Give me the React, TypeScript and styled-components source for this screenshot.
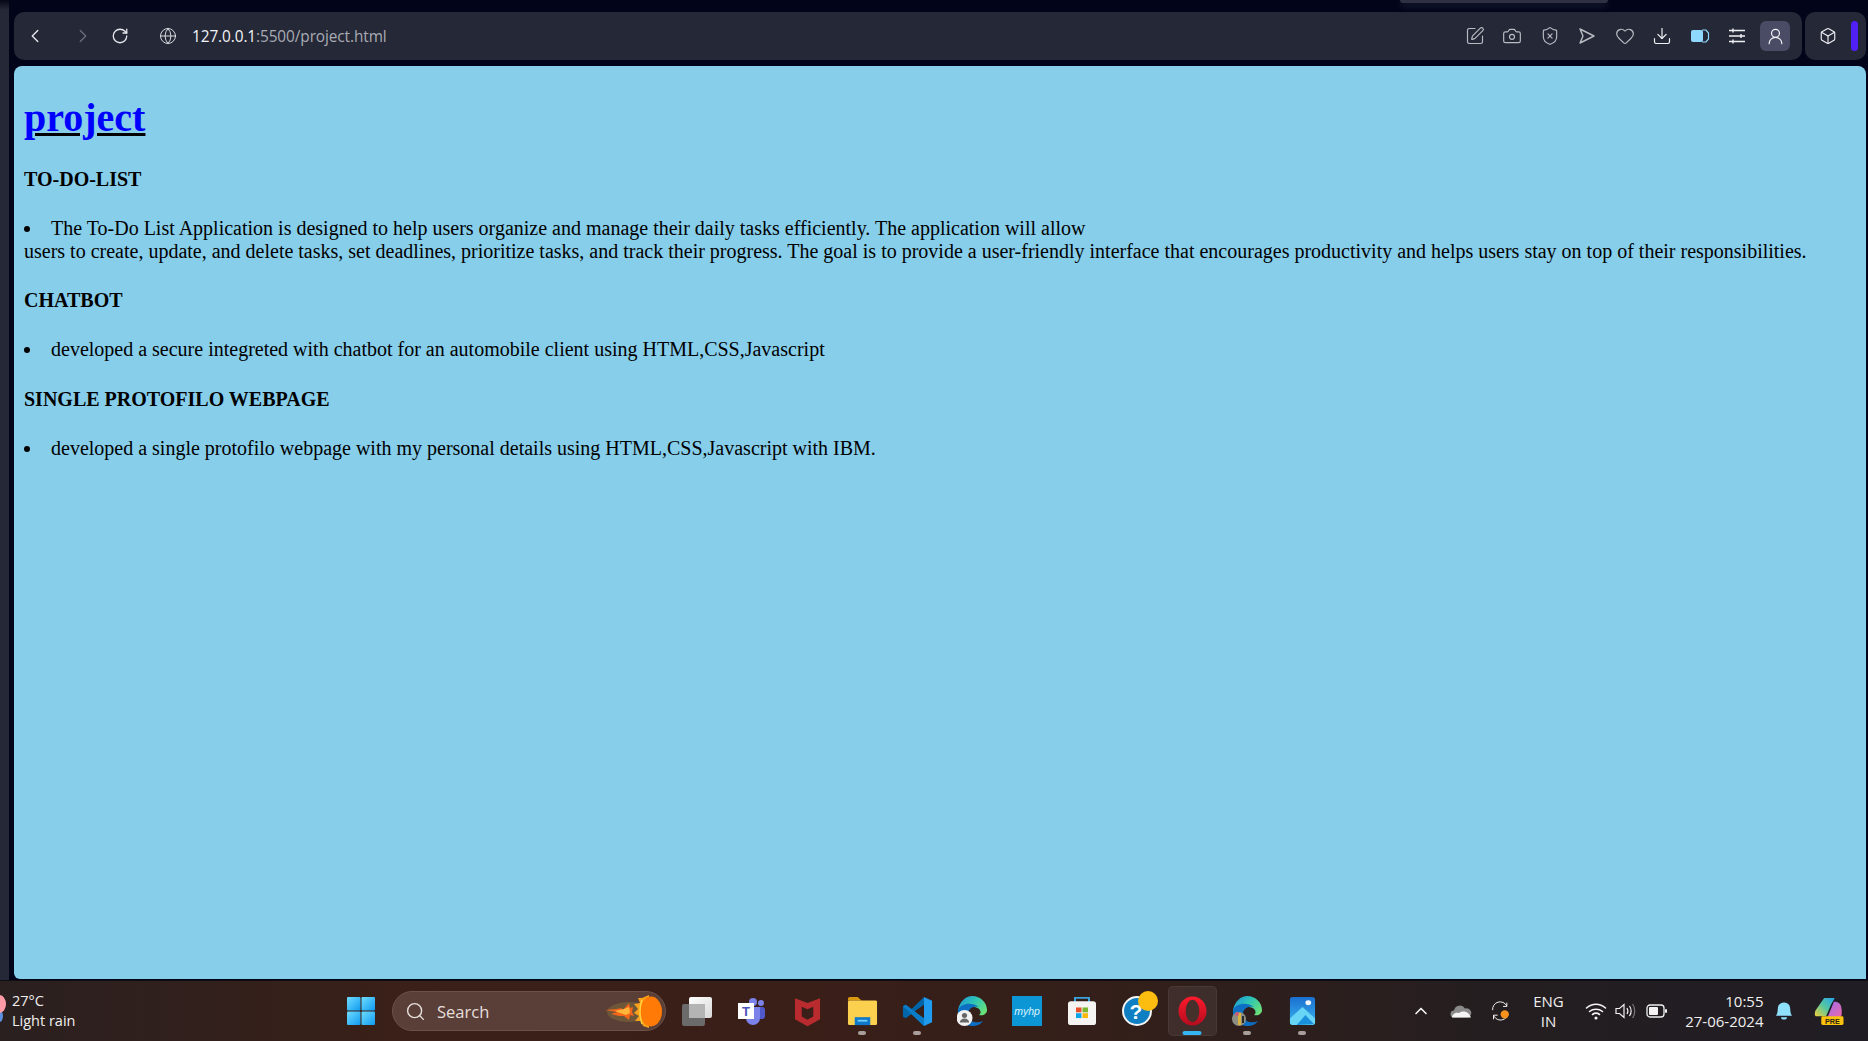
import React from 'react'
import styled, { createGlobalStyle } from 'styled-components';
import { ChevronLeft, ChevronRight, RotateCw, Globe, SquarePen, Camera, ShieldX, Heart, Download, UserRound, Box, Search, ChevronUp } from 'lucide-react';

const GlobalStyle = createGlobalStyle`
  html, body { margin: 0; padding: 0; height: 100%; overflow: hidden; background: #02041a; }
  #root { height: 100%; }
`;

const Shell = styled.div`
  display: flex;
  flex-direction: column;
  width: 1868px;
  height: 1041px;
  background: #02041a;
  font-family: "Open Sans", "Noto Sans", sans-serif;
`;

const Workspace = styled.div`
  position: relative;
  flex: 1;
  display: flex;
  flex-direction: column;
  gap: 6px;
  padding: 12px 2px 1px 14px;
  min-height: 0;
`;

const SideStrip = styled.div`
  position: absolute;
  left: 0;
  top: 0;
  bottom: 0;
  width: 9px;
  background: linear-gradient(#050718 0, #252836 10px);
`;

const TabGlow = styled.div`
  position: absolute;
  left: 1400px;
  top: 0;
  width: 208px;
  height: 3px;
  border-radius: 0 0 4px 4px;
  background: #2f3143;
  box-shadow: 0 3px 6px rgba(60, 62, 84, 0.6);
`;

const TopRow = styled.div`
  display: flex;
  gap: 3px;
  height: 48px;
`;

const Toolbar = styled.div`
  flex: 1;
  display: flex;
  align-items: center;
  padding: 0 12px 0 0;
  background: #252836;
  border-radius: 10px;
`;

const NavButton = styled.div<{ $w: number; $ml?: number; $dim?: boolean }>`
  display: flex;
  align-items: center;
  justify-content: center;
  width: ${p => p.$w}px;
  margin-left: ${p => p.$ml ?? 0}px;
  height: 30px;
  color: ${p => p.$dim ? "#6b6d78" : "#e8e9ee"};
`;

const Address = styled.div`
  flex: 1;
  margin-left: 14px;
  font-family: "Open Sans", sans-serif;
  font-size: 15.4px;
  color: #a9abb5;
  letter-spacing: -0.1px;
  span { color: #f2f3f6; }
`;

const ToolIcons = styled.div`
  display: flex;
  align-items: center;
  color: #b9bbc3;
`;

const ToolIcon = styled.div<{ $bright?: boolean }>`
  display: flex;
  align-items: center;
  justify-content: center;
  width: 37.5px;
  height: 30px;
  color: ${p => p.$bright ? "#f0f1f4" : "#b9bbc3"};
`;

const Avatar = styled.div`
  display: flex;
  align-items: center;
  justify-content: center;
  width: 30px;
  height: 30px;
  margin-left: 4px;
  border-radius: 6px;
  background: #4a4c66;
  color: #f2f2f6;
`;

const SidePanel = styled.div`
  position: relative;
  display: flex;
  align-items: center;
  gap: 14px;
  width: 61px;
  padding-left: 14px;
  box-sizing: border-box;
  background: #252836;
  border-radius: 10px;
  color: #f0f1f4;
`;

const PurpleBar = styled.div`
  width: 7px;
  height: 30px;
  border-radius: 4px;
  background: #5020f5;
`;

const PageFrame = styled.main`
  flex: 1;
  padding: 10px;
  background: #87ceeb;
  border-radius: 8px 8px 0 6px;
  font-family: "Liberation Serif", "Times New Roman", serif;
  font-size: 20px;
  line-height: 23px;
  color: #000;
  overflow: hidden;
`;

const PageTitle = styled.h1`
  margin: 19px 0 0;
  font-size: 40px;
  line-height: 46px;
  font-weight: 700;
  color: #0000ff;
  text-decoration: underline;
  text-decoration-color: #000;
  text-decoration-thickness: 3px;
`;

const SectionName = styled.p`
  margin: 26.5px 0 0;
  font-weight: 700;
`;

const Item = styled.p`
  margin: 26px 0 0;
`;

const Bullet = styled.span`
  display: inline-block;
  width: 27px;

  &::before {
    content: "";
    display: inline-block;
    width: 6px;
    height: 6px;
    margin-bottom: 3px;
    border-radius: 50%;
    background: #000;
  }
`;

const Taskbar = styled.footer`
  display: flex;
  align-items: center;
  height: 61px;
  flex: none;
  border-top: 1px solid #0d0d12;
  box-sizing: border-box;
  background: linear-gradient(90deg, #2a2020 0, #3a2018 22%, #3a1f18 42%, #331f1a 60%, #241e20 80%, #201d24 100%);
  color: #f0efee;
  font-family: "Open Sans", "Noto Sans", sans-serif;
  font-size: 15px;
`;

const Weather = styled.div`
  position: relative;
  width: 333px;
  padding-left: 12px;
  box-sizing: border-box;
  line-height: 20px;
  font-size: 14.5px;
  flex: none;
`;

const WeatherDot = styled.div`
  position: absolute;
  left: -7px;
  top: 4px;
  width: 13px;
  height: 18px;
  border-radius: 50%;
  background: #ff9ba6;
  box-shadow: 0 12px 0 -3px #5c8fe0;
`;

const Slot = styled.div<{ $active?: boolean }>`
  position: relative;
  flex: none;
  display: flex;
  align-items: center;
  justify-content: center;
  width: 55px;
  height: 50px;
  box-sizing: border-box;

  ${p => p.$active ? `
    &::before {
      content: "";
      position: absolute;
      top: 0;
      bottom: 0;
      left: 3px;
      right: 3px;
      border-radius: 5px;
      background: rgba(255,255,255,0.07);
      border: 1px solid rgba(255,255,255,0.05);
    }
  ` : ""}

  svg { position: relative; }
`;

const RunDot = styled.span<{ $active?: boolean }>`
  position: absolute;
  bottom: 1px;
  left: 50%;
  transform: translateX(-50%);
  width: ${p => p.$active ? 19 : 8}px;
  height: 4px;
  border-radius: 2px;
  background: ${p => p.$active ? "#35b5f2" : "#a89e9b"};
`;

const SearchPill = styled.div`
  flex: none;
  display: flex;
  align-items: center;
  gap: 11px;
  width: 274px;
  height: 40px;
  margin: 0 3.5px 0 4px;
  padding: 0 3px 0 12px;
  box-sizing: border-box;
  border-radius: 20px;
  background: #5a3f38;
  border: 1px solid #6b5249;
  font-size: 16.5px;
  color: #e6dfdc;
`;

const SearchLabel = styled.span`
  flex: 1;
`;

const Tray = styled.div`
  flex: 1;
  display: flex;
  align-items: center;
  padding-left: 81px;
  min-width: 0;
`;

const TrayIcon = styled.div<{ $w: number; $ml?: number }>`
  flex: none;
  display: flex;
  align-items: center;
  justify-content: center;
  width: ${p => p.$w}px;
  margin-left: ${p => p.$ml ?? 0}px;
  color: #f2f2f2;
`;

const Lang = styled.div`
  flex: none;
  width: 44px;
  margin-left: 16px;
  text-align: center;
  line-height: 20px;
`;

const Clock = styled.div`
  flex: none;
  width: 92px;
  text-align: right;
  line-height: 20px;
  white-space: nowrap;
`;

const Sized = { size: 20, strokeWidth: 1.4 };

const WinLogo = () => (
  <svg width="30" height="30" viewBox="0 0 30 30">
    <defs>
      <linearGradient id="w" x1="0" y1="0" x2="1" y2="1"><stop offset="0" stopColor="#6fdcff" /><stop offset="1" stopColor="#0f9bf0" /></linearGradient>
    </defs>
    <rect x="1" y="1" width="13.5" height="13.5" fill="url(#w)" rx="1" />
    <rect x="15.5" y="1" width="13.5" height="13.5" fill="url(#w)" rx="1" />
    <rect x="1" y="15.5" width="13.5" height="13.5" fill="url(#w)" rx="1" />
    <rect x="15.5" y="15.5" width="13.5" height="13.5" fill="url(#w)" rx="1" />
  </svg>
);

const Flame = () => (
  <svg width="57" height="33" viewBox="0 0 57 33">
    <ellipse cx="24" cy="17" rx="22" ry="10" fill="#a08a3a" opacity="0.3" />
    <path d="M0 15 L12 14 L16 13 L18 15 L24 8 L25 13 L28 12 L27 17 L29 21 L25 20 L24 25 L19 21 L14 21 L6 19 L12 17 Z" fill="#f5661a" />
    <path d="M10 16 L19 14 L24 12 L25 18 L21 20 L15 18 Z" fill="#ffb63a" />
    <path d="M44 0 L37 3 L33 3 L35 8 L29 9 L33 14 L29 18 L34 21 L30 26 L36 26 L38 31 L44 33 Z" fill="#f9a11b" />
    <ellipse cx="46" cy="16.5" rx="11" ry="15" fill="#ff7a06" />
    <path d="M37 5 Q33 16 37 29" stroke="#ffd23d" strokeWidth="1.5" fill="none" />
  </svg>
);

const TaskView = () => (
  <svg width="30" height="29" viewBox="0 0 30 29">
    <defs><linearGradient id="tv" x1="0" y1="0" x2="1" y2="1"><stop offset="0" stopColor="#ffffff" /><stop offset="1" stopColor="#d8d8d8" /></linearGradient></defs>
    <rect x="0" y="7" width="23" height="22" rx="2" fill="#6b6b6b" />
    <rect x="7" y="0" width="23" height="21" rx="2" fill="url(#tv)" />
    <rect x="7" y="7" width="16" height="14" fill="#b4b4b4" />
  </svg>
);

const Teams = () => (
  <svg width="30" height="30" viewBox="0 0 30 30">
    <circle cx="24" cy="7" r="3" fill="#7b83eb" />
    <circle cx="16" cy="6" r="4" fill="#7b83eb" />
    <rect x="20" y="11" width="8" height="12" rx="3" fill="#5059c9" />
    <path d="M9 11 H23 V22 a7 7 0 0 1 -14 0 Z" fill="#7b83eb" />
    <rect x="1" y="7" width="16" height="16" fill="#fff" />
    <text x="9" y="20" textAnchor="middle" fontFamily="Liberation Sans, sans-serif" fontWeight="700" fontSize="13" fill="#4b53bc">T</text>
  </svg>
);

const McAfee = () => (
  <svg width="27" height="31" viewBox="0 0 28 40" preserveAspectRatio="none">
    <path fillRule="evenodd" fill="#b92b2e" d="M1 3 L14 9 L27 3 V30 L14 39 L1 30 Z M8 14 V26.5 L14 30.5 L20 26.5 V14 L14 17 Z" />
  </svg>
);

const Explorer = () => (
  <svg width="31" height="30" viewBox="0 0 32 34" preserveAspectRatio="none">
    <path d="M1 3 a2 2 0 0 1 2 -2 H11 L15 5 H1 Z" fill="#d99a11" />
    <rect x="1" y="5" width="30" height="28" rx="1.5" fill="#fcd04f" />
    <rect x="8" y="24" width="16" height="9" fill="#0f78c8" />
    <rect x="11" y="27" width="10" height="2" fill="#6fd0f5" />
  </svg>
);

const VsCode = () => (
  <svg width="31" height="31" viewBox="0 0 100 100">
    <path d="M71 97 L97 85 V15 L71 3 Z" fill="#1f9cf0" />
    <path d="M71 3 L31 42 L12 28 L3 33 V67 L12 72 L31 58 L71 97 L71 72 L40 50 L71 28 Z" fill="#0065a9" />
    <path d="M12 28 L3 33 L71 97 L71 72 Z" fill="#0a7cc8" />
  </svg>
);

const Edge = ({ id, badge }: { id: string; badge: 'user' | 'photo' }) => (
  <svg width="30" height="30" viewBox="0 0 30 30">
    <defs>
      <linearGradient id={id} x1="0" y1="0" x2="1" y2="0.7"><stop offset="0" stopColor="#1b8fe0" /><stop offset="0.5" stopColor="#2fc6b4" /><stop offset="1" stopColor="#6fe273" /></linearGradient>
    </defs>
    <path d="M1 14 C3 5 9 0 15 0 C24 0 30 7 30 14 C30 18 26 20 22 19 C26 16 22 10 15 11 C8 12 3 16 1 22 Z" fill={`url(#${id})`} />
    <path d="M1 14 C0 24 8 30 15 30 C20 30 24 28 26 25 C20 28 12 26 11 19 C10 13 17 9 22 11 C14 5 3 8 1 14 Z" fill="#0d6fc4" />
    {badge === 'user'
      ? <g><circle cx="7.5" cy="22" r="8" fill="#f2f2f2" /><circle cx="7.5" cy="19.5" r="2.6" fill="#666" /><path d="M2.8 26.5 a4.7 4 0 0 1 9.4 0 Z" fill="#666" /></g>
      : <g><circle cx="7" cy="23" r="7" fill="#8d8d84" /><rect x="6" y="17" width="3" height="12" fill="#d8b23a" /><circle cx="5" cy="18" r="2" fill="#c85a7a" /><rect x="10" y="20" width="2" height="7" fill="#2b2b2b" /></g>}
  </svg>
);

const MyHp = () => (
  <svg width="30" height="30" viewBox="0 0 30 30">
    <rect width="30" height="30" fill="#0c96d6" />
    <text x="15" y="19" textAnchor="middle" fontFamily="Liberation Sans, sans-serif" fontStyle="italic" fontSize="10.5" fill="#dff3fb">myhp</text>
  </svg>
);

const Store = () => (
  <svg width="30" height="30" viewBox="0 0 30 34" preserveAspectRatio="none">
    <path d="M8 7 V2 H22 V7" stroke="#38a3dc" strokeWidth="2" fill="none" />
    <rect x="1" y="6" width="28" height="27" rx="3" fill="#f6f4f2" />
    <rect x="9" y="13" width="5.5" height="5.5" fill="#e8502a" />
    <rect x="15.5" y="13" width="5.5" height="5.5" fill="#7cb82f" />
    <rect x="9" y="19.5" width="5.5" height="5.5" fill="#0ea4e8" />
    <rect x="15.5" y="19.5" width="5.5" height="5.5" fill="#fbb80e" />
  </svg>
);

const Help = () => (
  <svg width="44" height="44" viewBox="0 0 44 44">
    <circle cx="22" cy="22" r="14" fill="#0e7fc2" stroke="#f4f4f4" strokeWidth="2" />
    <text x="21" y="30" textAnchor="middle" fontFamily="Liberation Sans, sans-serif" fontWeight="700" fontSize="21" fill="#fff">?</text>
    <circle cx="33" cy="12" r="10" fill="#fdbd10" />
  </svg>
);

const Opera = () => (
  <svg width="29" height="30" viewBox="0 0 30 36" preserveAspectRatio="none">
    <defs><linearGradient id="op" x1="0" y1="0" x2="0" y2="1"><stop offset="0" stopColor="#ff1b2d" /><stop offset="1" stopColor="#b30c1e" /></linearGradient></defs>
    <ellipse cx="15" cy="18" rx="14.5" ry="17.5" fill="url(#op)" />
    <ellipse cx="15" cy="18" rx="7" ry="13.5" fill="#46302b" />
  </svg>
);

const Photos = () => (
  <svg width="27" height="28" viewBox="0 0 28 34" preserveAspectRatio="none">
    <defs><linearGradient id="ph" x1="0" y1="0" x2="0" y2="1"><stop offset="0" stopColor="#1b6fd0" /><stop offset="1" stopColor="#39b4ee" /></linearGradient></defs>
    <rect width="26" height="34" x="1" rx="3" fill="url(#ph)" />
    <circle cx="20" cy="7" r="3" fill="#f2f6fb" />
    <path d="M1 31 V26 L14 12 L27 26 V31 a3 3 0 0 1 -3 3 H4 a3 3 0 0 1 -3 -3 Z" fill="#69d5f6" />
    <path d="M8 34 L17 22 L26 33 Z" fill="#1a8fdc" />
  </svg>
);

const Cloud = () => (
  <svg width="22" height="14" viewBox="0 0 22 14">
    <path d="M4 13.5 a3.5 3.5 0 0 1 0 -7 a6 6 0 0 1 11 -2 a4.5 4.5 0 0 1 3 9 Z" fill="#8a8a8a" />
    <path d="M2 13.5 C2 10 6 8 9 9 C12 6 19 7 21 13.5 Z" fill="#f4f4f4" />
  </svg>
);

const Sync = () => (
  <svg width="24" height="24" viewBox="0 0 24 24">
    <path d="M2 11 A9 9 0 0 1 19 6 M19 2 V6.5 H14.5 M18 20 A9 9 0 0 1 3 17 M3 22 V17 H8" stroke="#f0f0f0" strokeWidth="1.2" fill="none" />
    <circle cx="16.5" cy="16" r="5" fill="#f8931d" />
  </svg>
);

const Wifi = () => (
  <svg width="22" height="18" viewBox="0 0 22 18">
    <g stroke="#f4f4f4" strokeWidth="1.6" fill="none" strokeLinecap="round">
      <path d="M1.5 6 C7 1 15 1 20.5 6" />
      <path d="M4.5 9.5 C8 6.5 14 6.5 17.5 9.5" />
      <path d="M7.5 12.5 C9.5 11 12.5 11 14.5 12.5" />
    </g>
    <circle cx="11" cy="16" r="1.6" fill="#f4f4f4" />
  </svg>
);

const Speaker = () => (
  <svg width="22" height="18" viewBox="0 0 22 18">
    <path d="M1 6.5 H4.5 L9 2.5 V15.5 L4.5 11.5 H1 Z" stroke="#f0f0f0" strokeWidth="1.2" fill="none" />
    <path d="M12 6 C13.2 8 13.2 10 12 12 M14.5 4 C16.5 7 16.5 11 14.5 14" stroke="#f0f0f0" strokeWidth="1.2" fill="none" />
    <path d="M17.5 2 C20.5 6 20.5 12 17.5 16" stroke="#777" strokeWidth="1.2" fill="none" />
  </svg>
);

const Battery = () => (
  <svg width="22" height="14" viewBox="0 0 22 14">
    <rect x="1" y="1" width="17" height="12" rx="3" stroke="#f0f0f0" strokeWidth="1.3" fill="none" />
    <rect x="3" y="3" width="9" height="8" rx="1" fill="#f4f4f4" />
    <rect x="19" y="5" width="2" height="4" rx="1" fill="#f0f0f0" />
  </svg>
);

const Bell = () => (
  <svg width="18" height="20" viewBox="0 0 18 21" preserveAspectRatio="none">
    <path d="M1 15.5 C3 13 2.5 9 3 6.5 C4 0 14 0 15 6.5 C15.5 9 15 13 17 15.5 Z" fill="#8fe1fb" />
    <path d="M6 17 a3 2.5 0 0 0 6 0 Z" fill="#8fe1fb" />
  </svg>
);

const Copilot = () => (
  <svg width="30" height="29" viewBox="0 0 30 30">
    <defs>
      <linearGradient id="cp" x1="1" y1="0" x2="0" y2="1"><stop offset="0" stopColor="#26a3ee" /><stop offset="0.5" stopColor="#55c7a0" /><stop offset="1" stopColor="#f3cf38" /></linearGradient>
      <linearGradient id="cq" x1="0" y1="0" x2="1" y2="1"><stop offset="0" stopColor="#9a6cf0" /><stop offset="1" stopColor="#f06aa5" /></linearGradient>
    </defs>
    <path d="M10 1 H21 L17 8 L12 20 H2 C0 20 0 17 1 14 Z" fill="url(#cp)" />
    <path d="M20 5 C26 5 29 8 28 19 L26 22 H13 L18 10 Z" fill="url(#cq)" />
    <rect x="7" y="20" width="23" height="9" rx="1.5" fill="#f9c20f" />
    <text x="18.5" y="27.5" textAnchor="middle" fontFamily="Liberation Sans, sans-serif" fontWeight="700" fontSize="7.5" fill="#2a1f10">PRE</text>
  </svg>
);

const BatteryTool = () => (
  <svg width="20" height="14" viewBox="0 0 20 14">
    <path d="M12 1 H16 L18.5 4 V10 L16 13 H12" fill="none" stroke="#8fd8ff" strokeWidth="1.2" />
    <rect x="1" y="1" width="12" height="12" rx="2" fill="#8fd8ff" />
  </svg>
);

const SlidersTool = () => (
  <svg width="18" height="16" viewBox="0 0 18 16" stroke="#f0f1f4" strokeWidth="1.4">
    <path d="M1 2.5 H17 M1 8 H17 M1 13.5 H17" />
    <path d="M5 0.5 V4.5 M13 6 V10 M5 11.5 V15.5" />
  </svg>
);

const PlayOutline = () => (
  <svg width="18" height="18" viewBox="0 0 18 18">
    <path d="M2 2 L16 9 L2 16 L5 9 Z" fill="none" stroke="currentColor" strokeWidth="1.4" strokeLinejoin="round" />
  </svg>
);

const Apps = [
  { key: 'tv', icon: <TaskView /> },
  { key: 'teams', icon: <Teams /> },
  { key: 'mcafee', icon: <McAfee /> },
  { key: 'explorer', icon: <Explorer />, running: true },
  { key: 'code', icon: <VsCode />, running: true },
  { key: 'edge', icon: <Edge id="e1" badge="user" /> },
  { key: 'hp', icon: <MyHp /> },
  { key: 'store', icon: <Store /> },
  { key: 'help', icon: <Help /> },
  { key: 'opera', icon: <Opera />, active: true },
  { key: 'edge2', icon: <Edge id="e2" badge="photo" />, running: true },
  { key: 'photos', icon: <Photos />, running: true },
];

const App: React.FC = () => {
  return (
    <Shell>
      <GlobalStyle />
      <Workspace>
        <SideStrip />
        <TabGlow />
        <TopRow>
          <Toolbar>
            <NavButton $w={42}><ChevronLeft size={22} strokeWidth={1.5} /></NavButton>
            <NavButton $w={54} $dim><ChevronRight size={22} strokeWidth={1.5} /></NavButton>
            <NavButton $w={20}><RotateCw size={18} strokeWidth={1.7} /></NavButton>
            <NavButton $w={20} $ml={28}><Globe size={18} strokeWidth={1.2} /></NavButton>
            <Address><span>127.0.0.1</span>:5500/project.html</Address>
            <ToolIcons>
              <ToolIcon><SquarePen {...Sized} /></ToolIcon>
              <ToolIcon><Camera {...Sized} /></ToolIcon>
              <ToolIcon><ShieldX {...Sized} /></ToolIcon>
              <ToolIcon><PlayOutline /></ToolIcon>
              <ToolIcon><Heart {...Sized} /></ToolIcon>
              <ToolIcon $bright><Download {...Sized} /></ToolIcon>
              <ToolIcon><BatteryTool /></ToolIcon>
              <ToolIcon $bright><SlidersTool /></ToolIcon>
              <Avatar><UserRound size={19} strokeWidth={1.5} /></Avatar>
            </ToolIcons>
          </Toolbar>
          <SidePanel>
            <Box size={18} strokeWidth={1.5} />
            <PurpleBar />
          </SidePanel>
        </TopRow>
        <PageFrame>
          <PageTitle>project</PageTitle>
          <SectionName>TO-DO-LIST</SectionName>
          <Item>
            <Bullet />The To-Do List Application is designed to help users organize and manage their daily tasks efficiently. The application will allow<br />
            users to create, update, and delete tasks, set deadlines, prioritize tasks, and track their progress. The goal is to provide a user-friendly interface that encourages productivity and helps users stay on top of their responsibilities.
          </Item>
          <SectionName>CHATBOT</SectionName>
          <Item><Bullet />developed a secure integreted with chatbot for an automobile client using HTML,CSS,Javascript</Item>
          <SectionName>SINGLE PROTOFILO WEBPAGE</SectionName>
          <Item><Bullet />developed a single protofilo webpage with my personal details using HTML,CSS,Javascript with IBM.</Item>
        </PageFrame>
      </Workspace>
      <Taskbar>
        <Weather>
          <WeatherDot />
          <div>27°C</div>
          <div>Light rain</div>
        </Weather>
        <Slot><WinLogo /></Slot>
        <SearchPill>
          <Search size={21} strokeWidth={1.6} />
          <SearchLabel>Search</SearchLabel>
          <Flame />
        </SearchPill>
        {Apps.map(a => (
          <Slot key={a.key} $active={a.active}>
            {a.icon}
            {a.running && <RunDot />}
            {a.active && <RunDot $active />}
          </Slot>
        ))}
        <Tray>
          <TrayIcon $w={20}><ChevronUp size={22} strokeWidth={2} /></TrayIcon>
          <TrayIcon $w={60}><Cloud /></TrayIcon>
          <TrayIcon $w={20}><Sync /></TrayIcon>
          <Lang>ENG<br />IN</Lang>
          <TrayIcon $w={38} $ml={6}><Wifi /></TrayIcon>
          <TrayIcon $w={22}><Speaker /></TrayIcon>
          <TrayIcon $w={30} $ml={5}><Battery /></TrayIcon>
          <Clock>10:55<br />27-06-2024</Clock>
          <TrayIcon $w={40}><Bell /></TrayIcon>
          <TrayIcon $w={50}><Copilot /></TrayIcon>
        </Tray>
      </Taskbar>
    </Shell>
  );
};

export default App;
